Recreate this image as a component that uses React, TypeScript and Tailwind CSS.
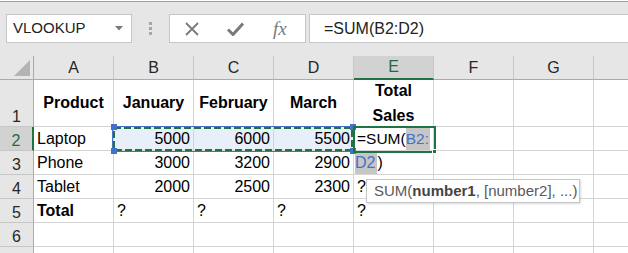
import React from 'react';

const COLS = ['A', 'B', 'C', 'D', 'E', 'F', 'G', 'H'];

type Cell = { text?: React.ReactNode; align?: 'left' | 'right' | 'center'; bold?: boolean; sel?: boolean };

const rows: { h: string; cells: Cell[] }[] = [
  {
    h: '1',
    cells: [
      { text: 'Product', align: 'center', bold: true },
      { text: 'January', align: 'center', bold: true },
      { text: 'February', align: 'center', bold: true },
      { text: 'March', align: 'center', bold: true },
      {
        text: (
          <span className="flex flex-col items-center leading-[25px]">
            <span>Total</span>
            <span>Sales</span>
          </span>
        ),
        align: 'center',
        bold: true,
      },
    ],
  },
  {
    h: '2',
    cells: [
      { text: 'Laptop' },
      { text: '5000', align: 'right', sel: true },
      { text: '6000', align: 'right', sel: true },
      { text: '5500', align: 'right', sel: true },
      {
        text: (
          <span className="flex h-full items-stretch text-[15.5px]">
            <span className="flex items-center">=SUM(</span>
            <span className="flex items-center bg-[#c6c6c6] pr-px text-[#4472c4]">B2:</span>
          </span>
        ),
      },
    ],
  },
  {
    h: '3',
    cells: [
      { text: 'Phone' },
      { text: '3000', align: 'right' },
      { text: '3200', align: 'right' },
      { text: '2900', align: 'right' },
      {
        text: (
          <span className="-ml-[2px] flex h-full items-stretch">
            <span className="flex items-center bg-[#c6c6c6] pr-[2px] text-[#4472c4]">D2</span>
            <span className="flex items-center">)</span>
          </span>
        ),
      },
    ],
  },
  {
    h: '4',
    cells: [
      { text: 'Tablet' },
      { text: '2000', align: 'right' },
      { text: '2500', align: 'right' },
      { text: '2300', align: 'right' },
      { text: '?' },
    ],
  },
  {
    h: '5',
    cells: [{ text: 'Total', bold: true }, { text: '?' }, { text: '?' }, { text: '?' }, { text: '?' }],
  },
  { h: '6', cells: [] },
  { h: '7', cells: [] },
];

function Toolbar() {
  return (
    <div className="flex h-[54px] items-start bg-[#e6e6e6] pt-[12px]">
      {/* name box */}
      <div className="ml-[6px] flex h-[29px] w-[126px] items-center justify-between border border-[#c6c6c6] bg-white pl-[6px] pr-[8px] text-[15px] text-[#222]">
        <span>VLOOKUP</span>
        <svg width="8" height="5" viewBox="0 0 8 5">
          <path d="M0 0h8L4 4.5z" fill="#7a7a7a" />
        </svg>
      </div>
      {/* dots */}
      <div className="ml-[17px] mt-[8px] flex flex-col gap-[2px]">
        <span className="block h-[3px] w-[3px] bg-[#a6a6a6]" />
        <span className="block h-[3px] w-[3px] bg-[#a6a6a6]" />
        <span className="block h-[3px] w-[3px] bg-[#a6a6a6]" />
      </div>
      {/* cancel / enter / fx */}
      <div className="ml-[17px] flex h-[29px] w-[137px] items-center border border-[#c6c6c6] bg-white">
        <svg className="ml-[15px]" width="14" height="14" viewBox="0 0 14 14">
          <path d="M1 1L13 13M13 1L1 13" stroke="#7a7a7a" strokeWidth="1.8" />
        </svg>
        <svg className="ml-[28px]" width="17" height="14" viewBox="0 0 17 14">
          <path d="M1 7.5L6 12.5L16 1.5" stroke="#7a7a7a" strokeWidth="3" fill="none" />
        </svg>
        <span className="ml-[29px] font-['Liberation_Serif',serif] text-[19px] italic leading-none text-[#7a7a7a]">
          fx
        </span>
      </div>
      {/* formula input */}
      <div className="ml-[3px] -mr-[4px] flex h-[29px] flex-1 items-center border border-[#c6c6c6] bg-white pl-[14px] text-[16px] text-[#222]">
        =SUM(B2:D2)
      </div>
    </div>
  );
}

function Grid() {
  return (
    <div className="relative">
      <div className="grid grid-cols-[34px_repeat(8,80px)] grid-rows-[24px_47px_repeat(7,24px)]">
        {/* corner */}
        <div className="relative border-r border-b border-[#ababab] bg-[#e6e6e6]">
          <svg className="absolute bottom-[3px] right-[3px]" width="16" height="16" viewBox="0 0 16 16">
            <path d="M16 0V16H0z" fill="#b4b4b4" />
          </svg>
        </div>
        {COLS.map((c) =>
          c === 'E' ? (
            <div
              key={c}
              className="flex items-center justify-center border-r border-b-2 border-r-[#c6c6c6] border-b-[#217346] bg-[#d2d2d2] text-[16px] text-[#1e6b41]"
            >
              {c}
            </div>
          ) : (
            <div
              key={c}
              className="flex items-center justify-center border-r border-b border-r-[#c6c6c6] border-b-[#ababab] bg-[#e6e6e6] text-[16px] text-[#262626]"
            >
              {c}
            </div>
          ),
        )}
        {rows.map((r) => (
          <React.Fragment key={r.h}>
            {r.h === '2' ? (
              <div className="flex items-end justify-center border-b border-r-2 border-b-[#c6c6c6] border-r-[#217346] bg-[#d2d2d2] text-[16px] leading-[19px] text-[#1e6b41]">
                {r.h}
              </div>
            ) : (
              <div className="flex items-end justify-center border-r border-b border-r-[#ababab] border-b-[#c6c6c6] bg-[#e6e6e6] text-[16px] leading-[19px] text-[#262626]">
                {r.h}
              </div>
            )}
            {COLS.map((c, i) => {
              const cell = r.cells[i] || {};
              const justify =
                cell.align === 'right' ? 'justify-end' : cell.align === 'center' ? 'justify-center' : 'justify-start';
              return (
                <div
                  key={c}
                  className={`flex items-center overflow-visible whitespace-nowrap border-r border-b border-[#d4d4d4] px-[3px] text-[16px] text-black ${justify} ${
                    cell.bold ? 'font-bold' : ''
                  } ${cell.sel ? 'bg-[#e8eff8]' : 'bg-white'}`}
                >
                  {cell.text}
                </div>
              );
            })}
          </React.Fragment>
        ))}
      </div>

      {/* copy/reference marquee B2:D2 */}
      <svg className="absolute left-[112px] top-[70px]" width="242" height="26" viewBox="0 0 242 26">
        <rect x="0.5" y="0.5" width="241" height="25" fill="none" stroke="#4472c4" strokeWidth="1" />
        <rect x="2" y="2" width="238" height="22" fill="none" stroke="#217346" strokeWidth="2" strokeDasharray="7 3" />
      </svg>
      <span className="absolute left-[111px] top-[68px] h-[6px] w-[6px] bg-[#4472c4]" />
      <span className="absolute left-[111px] top-[92px] h-[6px] w-[6px] bg-[#4472c4]" />
      <span className="absolute left-[350px] top-[68px] h-[6px] w-[6px] bg-[#4472c4]" />
      <span className="absolute left-[350px] top-[92px] h-[6px] w-[6px] bg-[#4472c4]" />

      {/* active cell E2 */}
      <div className="absolute left-[353px] top-[70px] h-[27px] w-[83px] border-2 border-[#217346]" />
      <span className="absolute left-[432px] top-[93px] h-[5px] w-[5px] border border-white bg-[#217346]" />

      {/* function tooltip */}
      <div className="absolute left-[366px] top-[123px] flex h-[24px] w-[214px] items-center border border-[#c6c6c6] bg-white pl-[7px] text-[15px] text-[#595959] shadow-[1px_1px_2px_rgba(0,0,0,0.15)]">
        SUM(<b className="font-bold text-[#444]">number1</b>, [number2], ...)
      </div>
    </div>
  );
}

export default function App() {
  return (
    <div className="h-[253px] w-[628px] overflow-hidden bg-white font-['Liberation_Sans',Arial,sans-serif]">
      <div className="h-px bg-white" />
      <div className="h-px bg-[#c9a227]" />
      <Toolbar />
      <Grid />
    </div>
  );
}
